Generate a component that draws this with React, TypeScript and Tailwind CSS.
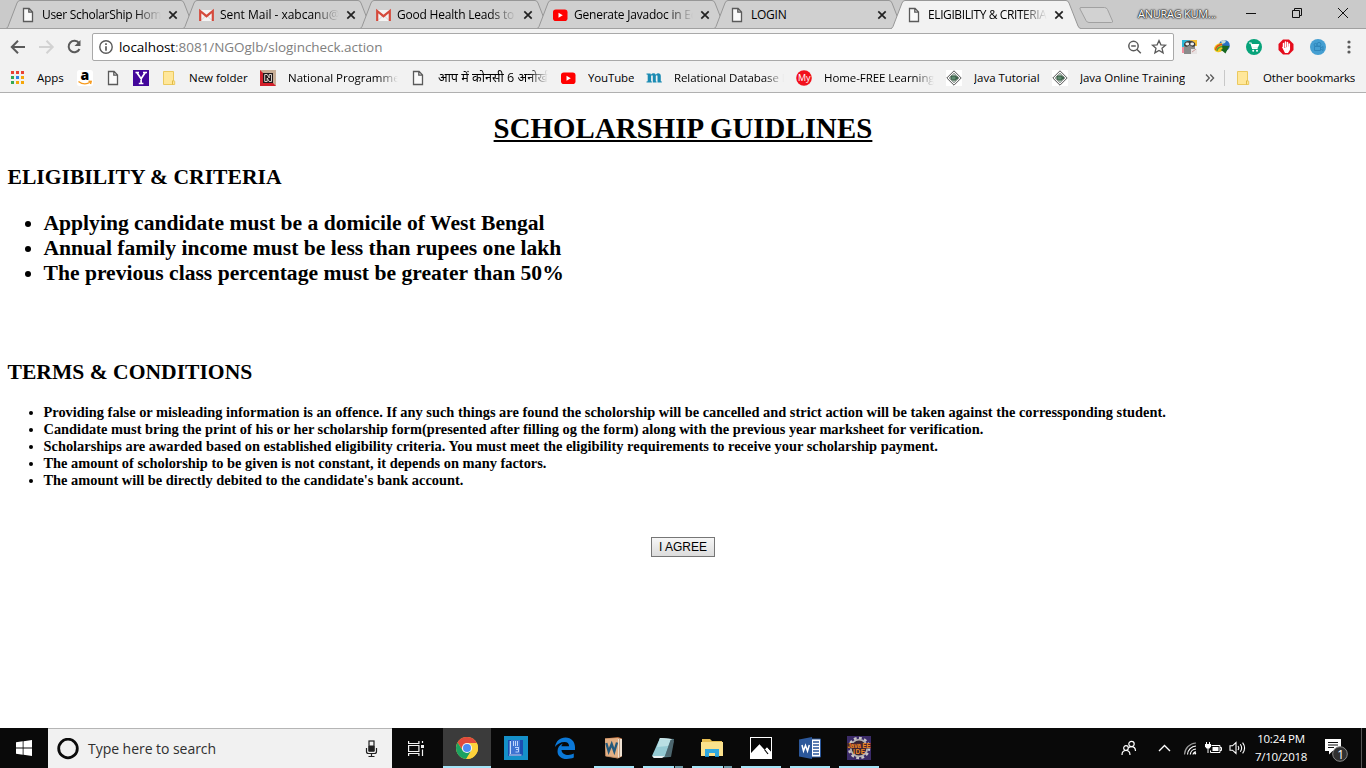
import type { ReactNode } from "react";

const UI = "font-['Open_Sans','Noto_Sans',sans-serif]";

function PageIcon() {
  return (
    <svg width="16" height="16" viewBox="0 0 16 16" className="shrink-0">
      <path d="M3.500 1.500h5.600l3.400 3.400v9.600h-9zM8.800 1.500v3.700h3.700" fill="#fafafa" stroke="#5a5a5a" strokeWidth="1.300" />
    </svg>
  );
}

function GmailIcon() {
  return (
    <svg width="16" height="16" viewBox="0 0 16 16" className="shrink-0">
      <path d="M2.500 3h12v11h-12z" fill="#f4f4f4" />
      <path d="M3.500 13l5-5 5 5" stroke="#d5d5d5" fill="none" />
      <path d="M2.200 14V4L8.500 9.200 14.800 4V14" fill="none" stroke="#d54b3d" strokeWidth="2.200" />
    </svg>
  );
}

function YoutubeIcon() {
  return (
    <svg width="16" height="16" viewBox="0 0 16 16" className="shrink-0">
      <rect x="1" y="2.500" width="14.500" height="11.500" rx="2.800" fill="#f00" />
      <path d="M6.500 5.700v5.100l4.300-2.550z" fill="#fff" />
    </svg>
  );
}

function FolderIcon() {
  return (
    <svg width="16" height="16" viewBox="0 0 16 16" className="shrink-0">
      <path d="M2.500 1.500h10v8.700l1.200 1v3.300H2.500z" fill="#ffe79a" stroke="#ebc95e" />
      <path d="M11.500 14.500v-3.700h1.500" fill="none" stroke="#e0ba46" />
    </svg>
  );
}

function AppsIcon() {
  const colors = ["#ea4335", "#ea4335", "#ea4335", "#34a853", "#2f86e8", "#f5a70a", "#34a853", "#f5a70a", "#f5a70a"];
  return (
    <svg width="16" height="16" viewBox="0 0 16 16" className="shrink-0">
      {colors.map((c, i) => (
        <rect key={i} x={2 + (i % 3) * 5} y={1 + Math.floor(i / 3) * 5} width="3" height="3" fill={c} />
      ))}
    </svg>
  );
}

function AmazonIcon() {
  return (
    <svg width="16" height="16" viewBox="0 0 16 16" className="shrink-0">
      <rect width="16" height="16" rx="2.500" fill="#fff" />
      <text x="3.600" y="10.300" fontSize="14" fontWeight="800" fontFamily="Open Sans, sans-serif">a</text>
      <path d="M1.500 11.500q6 4.500 12 .5M11.500 11.300l2.700.2-.7 2.500" fill="none" stroke="#f79a1c" strokeWidth="1.400" />
    </svg>
  );
}

function YahooIcon() {
  return (
    <svg width="16" height="16" viewBox="0 0 16 16" className="shrink-0">
      <rect width="16" height="16" fill="#43079b" />
      <path d="M2.500 2.500h3.500M10 2.500h4M4 2.700l4.100 6.100 4-6.100M8.100 8.500v5M5.800 13.500h4.600" fill="none" stroke="#fff" strokeWidth="1.700" />
    </svg>
  );
}

function NptelIcon() {
  return (
    <svg width="16" height="16" viewBox="0 0 16 16" className="shrink-0">
      <rect width="16" height="16" fill="#c8ae96" />
      <path d="M0 0l16 16H0z" fill="#d21f2a" />
      <rect x="3" y="3" width="10" height="10" fill="#211a1a" />
      <path d="M4.700 11.500V4.500h2.500l2 3.500V4.500h2.300v7H9.200l-2-3.500v3.500z" fill="#211a1a" stroke="#e9e2dc" strokeWidth=".9" />
    </svg>
  );
}

function MIcon() {
  return (
    <svg width="16" height="16" viewBox="0 0 16 16" className="shrink-0" fill="#1b8bb3">
      <path d="M.5 3.500h4l.4 1.200Q6 3.300 7.600 3.300q1.600 0 2.200 1.400 1.200-1.400 2.700-1.400 2.300 0 2.300 2.500v5.400l1 .3v1h-4.300V6.200q0-1-.7-1-.6 0-1 .6v5.400l.7.300v1H6.800V6.200q0-1-.7-1-.6 0-1 .6v5.400l.8.300v1H.5v-1l1.200-.3V4.800L.5 4.500z" />
    </svg>
  );
}

function MyIcon() {
  return (
    <svg width="16" height="16" viewBox="0 0 16 16" className="shrink-0">
      <circle cx="8" cy="8" r="7.800" fill="#f1101c" />
      <text x="2" y="11" fontSize="9" fill="#fff" fontFamily="Open Sans, sans-serif">My</text>
    </svg>
  );
}

function JavaIcon() {
  return (
    <svg width="16" height="16" viewBox="0 0 16 16" className="shrink-0">
      <rect width="16" height="16" fill="#fff" />
      <path d="M8 .8L15.200 8 8 15.200.8 8z" fill="#fafafa" stroke="#555" strokeWidth="1" />
      <path d="M8 3L13 8 8 13 3 8z" fill="#b3c5ba" stroke="#777" strokeWidth=".6" />
      <path d="M5 6h5v4H6.500q-1.500 0-1.500-2zM10 7h1.700v1.700H10" fill="#5f8b70" stroke="#31543d" strokeWidth=".9" />
    </svg>
  );
}

type TabData = { icon: ReactNode; title: string; track: string; active?: boolean; fade?: boolean; pad?: string };

const tabs: TabData[] = [
  { icon: <PageIcon />, title: "User ScholarShip Home", track: "tracking-[-0.3px]", fade: true, pad: "pl-[14px]" },
  { icon: <GmailIcon />, title: "Sent Mail - xabcanu@g", track: "tracking-[-0.02px]", fade: true },
  { icon: <GmailIcon />, title: "Good Health Leads to G", track: "tracking-[-0.2px]", fade: true },
  { icon: <YoutubeIcon />, title: "Generate Javadoc in Ecl", track: "tracking-[-0.22px]", fade: true },
  { icon: <PageIcon />, title: "LOGIN", track: "tracking-[-0.25px]" },
  { icon: <PageIcon />, title: "ELIGIBILITY & CRITERIA", track: "tracking-[-0.4px]", active: true, fade: true },
];

const FADE = "[mask-image:linear-gradient(to_right,black_78%,transparent)]";

function Tab({ icon, title, track, active, fade, pad = "pl-[15px]" }: TabData) {
  return (
    <div className={`relative h-[29px] w-[177px] shrink-0 ${active ? "z-20" : "z-10"}`}>
      <svg className="absolute left-0 top-0" width="192" height="29" viewBox="0 0 192 29">
        <path d="M0 29 C1 28.500 1.500 27.500 2 26.500L11 3Q12 .5 14 .5H175Q177 .5 178 3L187 26Q188 28.500 190 28.500V29z" fill={active ? "#f2f2f2" : "#d0d0d0"} />
        <path d="M0 28.500Q1.500 28 2 26.500L11 3Q12 .5 14 .5H175Q177 .5 178 3L187 26Q188 28.500 190 28.500" fill="none" stroke="#979797" />
        {!active && <path d="M0 28.500h190" stroke="#a0a0a0" />}
      </svg>
      <div className={`relative flex h-[29px] items-center ${pad}`}>
        {icon}
        <div className={`ml-[6px] w-[119px] overflow-hidden whitespace-nowrap text-[12px] leading-[18px] text-black ${track} ${fade ? FADE : ""}`}>{title}</div>
        <svg width="10" height="10" viewBox="0 0 10 10" className="ml-[7px] shrink-0">
          <path d="M1.300 1.300l7.400 7.400M8.700 1.300L1.300 8.700" stroke="#222" strokeWidth="1.700" />
        </svg>
      </div>
    </div>
  );
}

function TabStrip() {
  return (
    <div className="relative flex h-[29px] border-b border-[#a0a0a0] bg-[#cacaca] pl-[6px]">
      {tabs.map((t) => (
        <Tab key={t.title} {...t} />
      ))}
      <svg className="ml-[10px] mt-[6px] shrink-0" width="38" height="20" viewBox="0 0 38 20">
        <path d="M3 1.500h23.500q2 0 3 2l5 11.500q.5 1.500-1 1.500H11q-2 0-3-2L2 3Q1.500 1.500 3 1.500z" fill="#d2d2d2" stroke="#a1a1a1" />
      </svg>
      <div className="ml-[22px] w-[85px] whitespace-nowrap pt-[5px] text-[11px] leading-[18px] tracking-[-0.25px] text-white [text-shadow:0_0_2px_#222,0_0_1px_#222,0_0_1px_#222,0_0_2px_#222]">ANURAG KUM...</div>
      <svg className="ml-[22px] shrink-0" width="110" height="28" viewBox="0 0 110 28" fill="none" stroke="#111" strokeWidth="1">
        <path d="M1 13.500h10M47.500 10.500h7v7h-7zM49.500 10v-1.500h7v7H55M93 8l10 10M103 8L93 18" />
      </svg>
    </div>
  );
}

function Toolbar() {
  return (
    <div className="flex h-[35px] items-center bg-[#f2f2f2] pb-px pt-[1px]">
      <svg className="ml-[10px] shrink-0" width="82" height="20" viewBox="0 0 82 20" fill="none" strokeWidth="2">
        <path d="M15 10H2M8 3.800L1.800 10 8 16.200" stroke="#5a5a5a" />
        <path d="M29 10h13M36.500 3.800l6.200 6.200-6.200 6.200" stroke="#d2d2d2" />
        <path d="M69 6.200A5.700 5.700 0 1 0 69.500 12" stroke="#5a5a5a" />
        <path d="M70.500 3v6h-6z" fill="#5a5a5a" />
      </svg>
      <div className="flex h-[28px] w-[1082px] shrink-0 items-center rounded-[2px] border border-[#a9a9a9] bg-white">
        <svg className="ml-[5px] shrink-0" width="16" height="16" viewBox="0 0 16 16">
          <circle cx="8" cy="8" r="6.200" fill="none" stroke="#5a5a5a" strokeWidth="1.400" />
          <path d="M8 4.200v1.800M8 7.200v4.600" stroke="#5a5a5a" strokeWidth="1.700" />
        </svg>
        <div className="ml-[5px] whitespace-nowrap text-[13.5px] leading-[20px] tracking-[-0.05px] text-[#808080]">
          <span className="text-black">localhost</span>:8081/NGOglb/slogincheck.action
        </div>
        <svg className="ml-auto mr-[4px] shrink-0" width="44" height="18" viewBox="0 0 44 18" fill="none" stroke="#5a5a5a" strokeWidth="1.500">
          <circle cx="8.500" cy="8" r="4.700" />
          <path d="M11.800 11.300l4 4M6.200 8h4.600" />
          <path d="M34 2.500l1.900 4.300 4.600.4-3.500 3.100 1.100 4.600-4.100-2.500-4.100 2.500 1.100-4.600-3.500-3.100 4.600-.4z" strokeWidth="1.300" />
        </svg>
      </div>
      <div className="ml-[8px] flex items-center gap-[16px]">
        <svg width="16" height="16" viewBox="0 0 16 16">
          <path d="M0 1h8v8H0z" fill="#2bb7d9" />
          <path d="M8 1h7v6H8z" fill="#f6bd32" />
          <path d="M0 8h4v6H0z" fill="#ee8d9d" />
          <path d="M2 15V7q0-5.500 5.500-5.500T13 7v8z" fill="#8b8b8b" />
          <path d="M2 6q0-4 5.700-4T13.500 6q-1 2.500-3.500 1.500L7.700 6 5.500 7.500Q3 8.500 2 6z" fill="#3a3a3a" />
          <ellipse cx="5.300" cy="5" rx="1.900" ry="1.400" fill="#eee" />
          <ellipse cx="10.200" cy="5" rx="1.900" ry="1.400" fill="#eee" />
          <path d="M9 10h6v5H9z" fill="#e8e4e4" />
          <path d="M10 13l4-3" stroke="#c99" />
        </svg>
        <svg width="16" height="16" viewBox="0 0 16 16">
          <circle cx="10.300" cy="6.500" r="5.500" fill="#2870c4" />
          <path d="M7 2q3-2 5 0l-1 2-3 1z" fill="#c7dbd8" />
          <path d="M0 9q2-5 8-5l1 7q-3 3-6 2-3-1-3-4z" fill="#f2c51d" />
          <path d="M1.500 11q1-5 6.500-5.500" stroke="#d64a25" strokeWidth="1.300" fill="none" />
          <path d="M3 12q0-3.500 5-4.500" stroke="#4ba236" strokeWidth="1.300" fill="none" />
          <path d="M8 6.500l7.500.5-1.700 2.800-2.300 4.700-3-2.500-2-1 2-1z" fill="#176720" />
        </svg>
        <svg width="16" height="16" viewBox="0 0 16 16">
          <circle cx="8" cy="8" r="8" fill="#07a37a" />
          <path d="M3 4h2l1.600 5.500h5M6 5.500h6.500L11.500 8H7" fill="none" stroke="#fff" strokeWidth="1.200" />
          <path d="M5.500 5.500h7l-1 3.300h-5z" fill="#fff" />
          <circle cx="7.200" cy="11.700" r="1" fill="#fff" />
          <circle cx="11" cy="11.700" r="1" fill="#fff" />
        </svg>
        <svg width="16" height="16" viewBox="0 0 16 16">
          <path d="M5 .5h6L15.500 5v6L11 15.500H5L.5 11V5z" fill="#e50c1c" />
          <path d="M5.500 9V4.500M7.500 8V3M9.500 8V3.500M11.300 10V5" stroke="#fff" strokeWidth="1.500" strokeLinecap="round" />
          <path d="M4 8l1.200-.2L6 9l5.900-2v4L10 14H7z" fill="#fff" />
        </svg>
        <svg width="16" height="16" viewBox="0 0 16 16">
          <circle cx="8" cy="8" r="8" fill="#459fd2" />
          <g fill="none" stroke="#2d83b8" strokeWidth=".9">
            <path d="M4.500 7.500h6v4h-6zM10.500 9l2.500-1.500v4L10.500 10" />
            <circle cx="5.500" cy="5.800" r="1.400" />
            <circle cx="9" cy="5.300" r="1.900" />
          </g>
        </svg>
        <svg className="ml-[5px]" width="4" height="16" viewBox="0 0 4 16" fill="#5a5a5a">
          <circle cx="2" cy="3" r="1.600" />
          <circle cx="2" cy="8" r="1.600" />
          <circle cx="2" cy="13" r="1.600" />
        </svg>
      </div>
    </div>
  );
}

function Bookmark({ icon, text, width, track = "tracking-[-0.03px]", size = "text-[11.5px]", fade }: { icon: ReactNode; text?: string; width: string; track?: string; size?: string; fade?: boolean }) {
  return (
    <div className={`flex shrink-0 items-center ${width}`}>
      {icon}
      {text && (
        <span className={`ml-[12px] overflow-hidden whitespace-nowrap leading-[18px] text-black ${size} ${track} ${fade ? "w-[110px] [mask-image:linear-gradient(to_right,black_82%,transparent)]" : ""}`}>{text}</span>
      )}
    </div>
  );
}

function BookmarksBar() {
  return (
    <div className="flex h-[29px] items-center border-b border-[#b0b0b0] bg-[#f2f2f2] pb-px pl-[9px]">
      <Bookmark icon={<AppsIcon />} text="Apps" width="w-[68px]" />
      <Bookmark icon={<AmazonIcon />} width="w-[28px]" />
      <Bookmark icon={<PageIcon />} width="w-[28px]" />
      <Bookmark icon={<YahooIcon />} width="w-[28px]" />
      <Bookmark icon={<FolderIcon />} text="New folder" width="w-[99px]" />
      <Bookmark icon={<NptelIcon />} text="National Programme" width="w-[150px]" track="tracking-[-0.02px]" fade />
      <Bookmark icon={<PageIcon />} text="आप में कोनसी 6 अनोखी" width="w-[150px]" size="text-[12.6px]" track="" fade />
      <Bookmark icon={<YoutubeIcon />} text="YouTube" width="w-[86px]" track="tracking-[-0.15px]" />
      <Bookmark icon={<MIcon />} text="Relational Database D" width="w-[150px]" track="tracking-[-0.1px]" fade />
      <Bookmark icon={<MyIcon />} text="Home-FREE Learning" width="w-[150px]" track="tracking-[-0.07px]" fade />
      <Bookmark icon={<JavaIcon />} text="Java Tutorial" width="w-[106px]" />
      <Bookmark icon={<JavaIcon />} text="Java Online Training" width="w-[153px]" track="tracking-[-0.07px]" />
      <svg width="10" height="10" viewBox="0 0 10 10" className="shrink-0" fill="none" stroke="#5a5a5a" strokeWidth="1.300">
        <path d="M1 1.500L4.300 5 1 8.500M5.300 1.500L8.600 5 5.300 8.500" />
      </svg>
      <div className="ml-[9px] h-[16px] w-px bg-[#c8c8c8]" />
      <div className="ml-[10px]">
        <Bookmark icon={<FolderIcon />} text="Other bookmarks" width="w-[130px]" track="tracking-[-0.15px]" />
      </div>
    </div>
  );
}

const criteria = [
  "Applying candidate must be a domicile of West Bengal",
  "Annual family income must be less than rupees one lakh",
  "The previous class percentage must be greater than 50%",
];

const terms = [
  "Providing false or misleading information is an offence. If any such things are found the scholorship will be cancelled and strict action will be taken against the corressponding student.",
  "Candidate must bring the print of his or her scholarship form(presented after filling og the form) along with the previous year marksheet for verification.",
  "Scholarships are awarded based on established eligibility criteria. You must meet the eligibility requirements to receive your scholarship payment.",
  "The amount of scholorship to be given is not constant, it depends on many factors.",
  "The amount will be directly debited to the candidate's bank account.",
];

function Document() {
  return (
    <main className="flex-1 overflow-hidden bg-white px-[7.500px] pt-[19px] font-['Liberation_Serif',serif] font-bold text-black">
      <h1 className="text-center text-[28.8px] leading-[33px] tracking-[0.09px] underline decoration-[2px] underline-offset-[2px]">SCHOLARSHIP GUIDLINES</h1>
      <h2 className="mt-[20px] text-[21.6px] leading-[25px]">ELIGIBILITY &amp; CRITERIA</h2>
      <ul className="mt-[21px] list-disc pl-[36px] text-[21.6px] leading-[25px]">
        {criteria.map((c) => (
          <li key={c}>{c}</li>
        ))}
      </ul>
      <h2 className="mt-[74px] text-[21.6px] leading-[25px]">TERMS &amp; CONDITIONS</h2>
      <ul className="mt-[19px] list-disc pl-[36px] text-[14.4px] leading-[17px]">
        {terms.map((t) => (
          <li key={t} className="whitespace-nowrap">{t}</li>
        ))}
      </ul>
      <div className="mt-[48px] flex justify-center">
        <button className="h-[20px] w-[64px] border border-[#767676] bg-linear-to-b from-[#f6f6f6] to-[#dcdcdc] font-['Liberation_Sans',sans-serif] text-[12px] font-normal leading-[18px]">I AGREE</button>
      </div>
    </main>
  );
}

function ChromeIcon() {
  return (
    <svg width="22" height="22" viewBox="0 0 22 22">
      <circle cx="11" cy="11" r="11" fill="#fdd23b" />
      <path d="M11 6h9.800A11 11 0 0 0 1.500 5.500L6.500 13z" fill="#e04a3c" />
      <path d="M1.500 5.500A11 11 0 0 0 10.200 22L15 14 6.700 13.500z" fill="#1ca261" />
      <path d="M10.200 22A11 11 0 0 0 20.800 6H11l4.300 8z" fill="#fdd23b" />
      <circle cx="11" cy="11" r="5.100" fill="#f5f5f5" />
      <circle cx="11" cy="11" r="4" fill="#4b8bf4" />
    </svg>
  );
}

function ReaderIcon() {
  return (
    <svg width="24" height="24" viewBox="0 0 24 24">
      <rect width="24" height="24" fill="#1590c9" />
      <path d="M4 4h15v15l-1.500 1H4z" fill="#1b4fb2" />
      <path d="M7 4h9v14H7z" fill="#3f74d2" />
      <path d="M6.300 5v13" stroke="#dceaff" strokeWidth="1.200" />
      <path d="M9.500 5v5M11.500 5v5M13.500 5v5" stroke="#cfe0ff" strokeWidth=".9" />
      <path d="M11 11.500h3.500M12 13.500h3M11.500 16h3M14.500 11v5" stroke="#b7d2ff" />
      <path d="M5 19h12.500" stroke="#dceaff" />
    </svg>
  );
}

function EdgeIcon() {
  return (
    <svg width="22" height="22" viewBox="0 0 22 22">
      <path d="M1 10C2 4 6 .5 11.500.5 17.500.5 21 5 21 10v3H7.500c.2 3.500 3.500 5 6.800 5 2.200 0 4-.6 5.500-1.400v4c-2 1-4.500 1.400-7 1.400C7 22 3.500 18.800 3.500 14.200 3.500 10.500 5.500 8 9 6.500 8 7.500 7.500 8.500 7.400 9.300h7.700c0-2.800-1.700-4.300-4.400-4.300C6.500 5 3 7 1 10z" fill="#0b78d7" />
    </svg>
  );
}

function WordWebIcon() {
  return (
    <svg width="22" height="24" viewBox="0 0 22 24">
      <path d="M2 2.500L15 1l4 1.500v18l-4 2L2.500 20z" fill="#b76b3a" />
      <path d="M2 2.500L15 2v20L2.500 20z" fill="#e3b085" />
      <path d="M15 2.500l4 .5v17l-4 2z" fill="#eee1d2" />
      <path d="M16.500 3v18M2.500 20L15 22" stroke="#b98a66" strokeWidth=".8" />
      <path d="M3.300 7l2.400 8.500L8.700 8l2.600 7.500L14 6.500" fill="none" stroke="#24597c" strokeWidth="2.300" />
    </svg>
  );
}

function NotepadIcon() {
  return (
    <svg width="24" height="24" viewBox="0 0 24 24">
      <path d="M9 2l14 1-4 18-17 1z" fill="#517a83" />
      <path d="M9 2l11 1-6 17H1z" fill="#94cad3" />
      <path d="M9 2l11 1-3 7-11 1z" fill="#b9dfe3" />
      <path d="M20 3l3 2-3 16-6-1z" fill="#4d666e" />
      <path d="M1 20h13l-3 2H3z" fill="#e9eff0" />
      <path d="M9.500 2.500l11 1" stroke="#eee" strokeDasharray="1 1" />
    </svg>
  );
}

function ExplorerIcon() {
  return (
    <svg width="22" height="20" viewBox="0 0 22 20">
      <path d="M1 1h8l2 2h10v15H1z" fill="#e7bd51" />
      <path d="M0 4h22v14H0z" fill="#fbe18c" />
      <path d="M4 11h14v8h-4v-4H8v4H4z" fill="#31a9e0" />
      <path d="M4 18.500h4M14 18.500h4" stroke="#1486bf" />
    </svg>
  );
}

function PhotosIcon() {
  return (
    <svg width="22" height="22" viewBox="0 0 22 22">
      <rect width="22" height="22" fill="#fff" />
      <path d="M1 16l8.500-9 5 5.500L17 10l4 4.500V1H1z" fill="#050505" />
      <path d="M1 1h20v13.500L17 10l-2.500 2.500L9.500 7 1 15.500z" fill="#050505" />
      <path d="M14.500 12.500l3.500 4.500" stroke="#050505" strokeWidth="1.200" />
    </svg>
  );
}

function WordIcon() {
  return (
    <svg width="22" height="22" viewBox="0 0 22 22">
      <path d="M12 2h9.500v18H12z" fill="#fff" stroke="#2b579a" />
      <path d="M14 5h6M14 8h6M14 11h6M14 14h6M14 17h6" stroke="#2b579a" strokeWidth="1.300" />
      <path d="M0 2.500L13 0v22L0 19.500z" fill="#2b579a" />
      <path d="M3 8l1.500 6 2-5.500L8.500 14 10.300 8" fill="none" stroke="#fff" strokeWidth="1.500" />
    </svg>
  );
}

function JavaEEIcon() {
  return (
    <svg width="24" height="24" viewBox="0 0 24 24">
      <rect width="24" height="24" fill="#3b2b68" />
      <circle cx="12" cy="12" r="10" fill="none" stroke="#c9c6c6" strokeWidth="2.500" strokeDasharray="2.800 2.400" />
      <circle cx="12" cy="12" r="8.300" fill="#352335" stroke="#b5b1b1" strokeWidth="1.800" />
      <rect x="0" y="7" width="24" height="5.500" fill="#4a2530" />
      <text x=".5" y="12.300" fontSize="6.500" fontWeight="700" fill="#f28b24" fontFamily="Liberation Sans, sans-serif" textLength="23" lengthAdjust="spacingAndGlyphs">Java EE</text>
      <text x="6" y="18" fontSize="6.500" fontWeight="700" fill="#f28b24" fontFamily="Liberation Sans, sans-serif" textLength="12">IDE</text>
    </svg>
  );
}

type App = { name: string; icon: ReactNode; state: "active" | "open" | "stack" | "idle" };

const apps: App[] = [
  { name: "chrome", icon: <ChromeIcon />, state: "active" },
  { name: "reader", icon: <ReaderIcon />, state: "idle" },
  { name: "edge", icon: <EdgeIcon />, state: "idle" },
  { name: "wordweb", icon: <WordWebIcon />, state: "open" },
  { name: "notepad", icon: <NotepadIcon />, state: "stack" },
  { name: "explorer", icon: <ExplorerIcon />, state: "stack" },
  { name: "photos", icon: <PhotosIcon />, state: "open" },
  { name: "word", icon: <WordIcon />, state: "open" },
  { name: "eclipse", icon: <JavaEEIcon />, state: "open" },
];

function TaskbarApp({ icon, state }: App) {
  return (
    <div className={`flex h-[40px] w-[48px] shrink-0 flex-col items-center ${state === "active" ? "bg-[#3b3b3b]" : ""}`}>
      <div className="flex h-[38px] items-center pt-[2px]">{icon}</div>
      {state === "active" && <div className="h-[2px] w-[48px] bg-[#a3e4f7]" />}
      {state === "open" && <div className="h-[2px] w-[40px] bg-[#a3e4f7]" />}
      {state === "stack" && (
        <div className="flex h-[2px] w-[40px]">
          <div className="w-[31px] bg-[#a3e4f7]" />
          <div className="ml-px w-[8px] bg-[#6f9ba8]" />
        </div>
      )}
    </div>
  );
}

function Taskbar() {
  return (
    <footer className="flex h-[40px] shrink-0 items-center bg-[#090909]">
      <div className="flex w-[48px] justify-center">
        <svg width="16" height="16" viewBox="0 0 16 16" fill="#fff">
          <path d="M0 2.200L6.700 1.300V7.600H0zM7.500 1.200L16 0v7.600H7.500zM0 8.400h6.700v6.300L0 13.800zM7.500 8.400H16V16l-8.500-1.200z" />
        </svg>
      </div>
      <div className="flex h-[40px] w-[344px] items-center border-t border-[#b5b5b5] bg-[#f1f1f1]">
        <svg className="ml-[9px]" width="22" height="22" viewBox="0 0 22 22">
          <circle cx="11" cy="10.500" r="9.300" fill="none" stroke="#0b0b0b" strokeWidth="2.800" />
        </svg>
        <span className="ml-[9px] whitespace-nowrap text-[14px] leading-[20px] tracking-[-0.04px] text-[#2f2f2f]">Type here to search</span>
        <svg className="ml-auto mr-[14px]" width="13" height="18" viewBox="0 0 13 18" fill="none" stroke="#222">
          <rect x="4" y="1" width="5" height="10" strokeWidth="1.200" />
          <path d="M4 6h5v5H4z" fill="#222" />
          <path d="M1.500 8v3.500q0 2 2 2h6q2 0 2-2V8M6.500 13.500v3M3.500 16.500h6" strokeWidth="1.200" />
        </svg>
      </div>
      <div className="flex w-[51px] pl-[16px]">
        <svg width="17" height="17" viewBox="0 0 17 17" fill="none" stroke="#f3f3f3" strokeWidth="1.200">
          <path d="M.6 1v2.500h10.300V1M.6 5.500h10.300v6H.6zM.6 16v-2.500h10.300V16M14.500 1v2M14.500 9.500V16" />
          <path d="M13 5h3v3h-3z" fill="#f3f3f3" stroke="none" />
        </svg>
      </div>
      <div className="flex gap-px">
        {apps.map((a) => (
          <TaskbarApp key={a.name} {...a} />
        ))}
      </div>
      <div className="ml-auto flex h-[40px] items-center text-white">
        <svg width="16" height="16" viewBox="0 0 16 16" fill="none" stroke="#fff" strokeWidth="1.200">
          <circle cx="10.500" cy="4" r="2.700" />
          <circle cx="5" cy="8" r="2.300" />
          <path d="M1 15q0-4.500 4-4.500t4 4.500M7.500 7.800q1-1.200 3-1.200 4 0 4 4.400" />
        </svg>
        <svg className="ml-[21px]" width="13" height="8" viewBox="0 0 13 8" fill="none" stroke="#fff" strokeWidth="1.400">
          <path d="M1 7l5.500-5.500L12 7" />
        </svg>
        <svg className="ml-[12px]" width="14" height="14" viewBox="0 0 14 14" fill="none" strokeWidth="1.200">
          <path d="M1.500 13.500A12 12 0 0 1 13 2" stroke="#999" />
          <path d="M4.500 13.500A9 9 0 0 1 13 5M7.300 13.500A6 6 0 0 1 13 8M10 13.500q.5-2.500 3-2.700" stroke="#fff" />
          <circle cx="12.200" cy="12.500" r="1" fill="#fff" />
        </svg>
        <svg className="ml-[8px]" width="17" height="13" viewBox="0 0 17 13" fill="none" stroke="#fff" strokeWidth="1">
          <path d="M6.500 3.500h8.500v7H5.500V8.500M15 5.500h1.500v3H15" />
          <path d="M7.500 5h6v4h-6z" fill="#fff" stroke="none" />
          <path d="M1.500 0v2M4.500 0v2M3 6v5" />
          <path d="M0 2h6v2.500L4.500 6.500h-3L0 4.500z" fill="#fff" stroke="none" />
        </svg>
        <svg className="ml-[7px]" width="17" height="14" viewBox="0 0 17 14" fill="none" stroke="#fff" strokeWidth="1.100">
          <path d="M1 4.800h2.500L7 1.500v11L3.500 9.200H1zM9 5q1.500 2 0 4M11.300 3.300q2.700 3.700 0 7.400M13.600 1.600q4 5.400 0 10.800" />
        </svg>
        <div className="ml-[6px] mb-[1px] w-[58px] text-center text-[11.5px] leading-[18px] tracking-[-0.25px]">
          <div className="whitespace-nowrap">10:24 PM</div>
          <div className="whitespace-nowrap">7/10/2018</div>
        </div>
        <svg className="ml-[13px]" width="28" height="28" viewBox="0 0 28 28">
          <path d="M2 5h16v12H9.500L6 20.500V17H2z" fill="#fff" />
          <path d="M5 8.500h10M5 11h10M5 13.500h6" stroke="#111" strokeWidth="1.100" />
          <circle cx="17" cy="20" r="7.300" fill="#303030" stroke="#888" strokeWidth="1" />
          <text x="14.200" y="24.500" fontSize="12" fill="#fff" fontFamily="Open Sans, sans-serif">1</text>
        </svg>
        <div className="ml-[10px] mr-[4px] h-[40px] w-px bg-[#555]" />
      </div>
    </footer>
  );
}

export default function App() {
  return (
    <div className={`flex h-[768px] w-[1366px] flex-col overflow-hidden bg-white ${UI}`}>
      <TabStrip />
      <Toolbar />
      <BookmarksBar />
      <Document />
      <Taskbar />
    </div>
  );
}
